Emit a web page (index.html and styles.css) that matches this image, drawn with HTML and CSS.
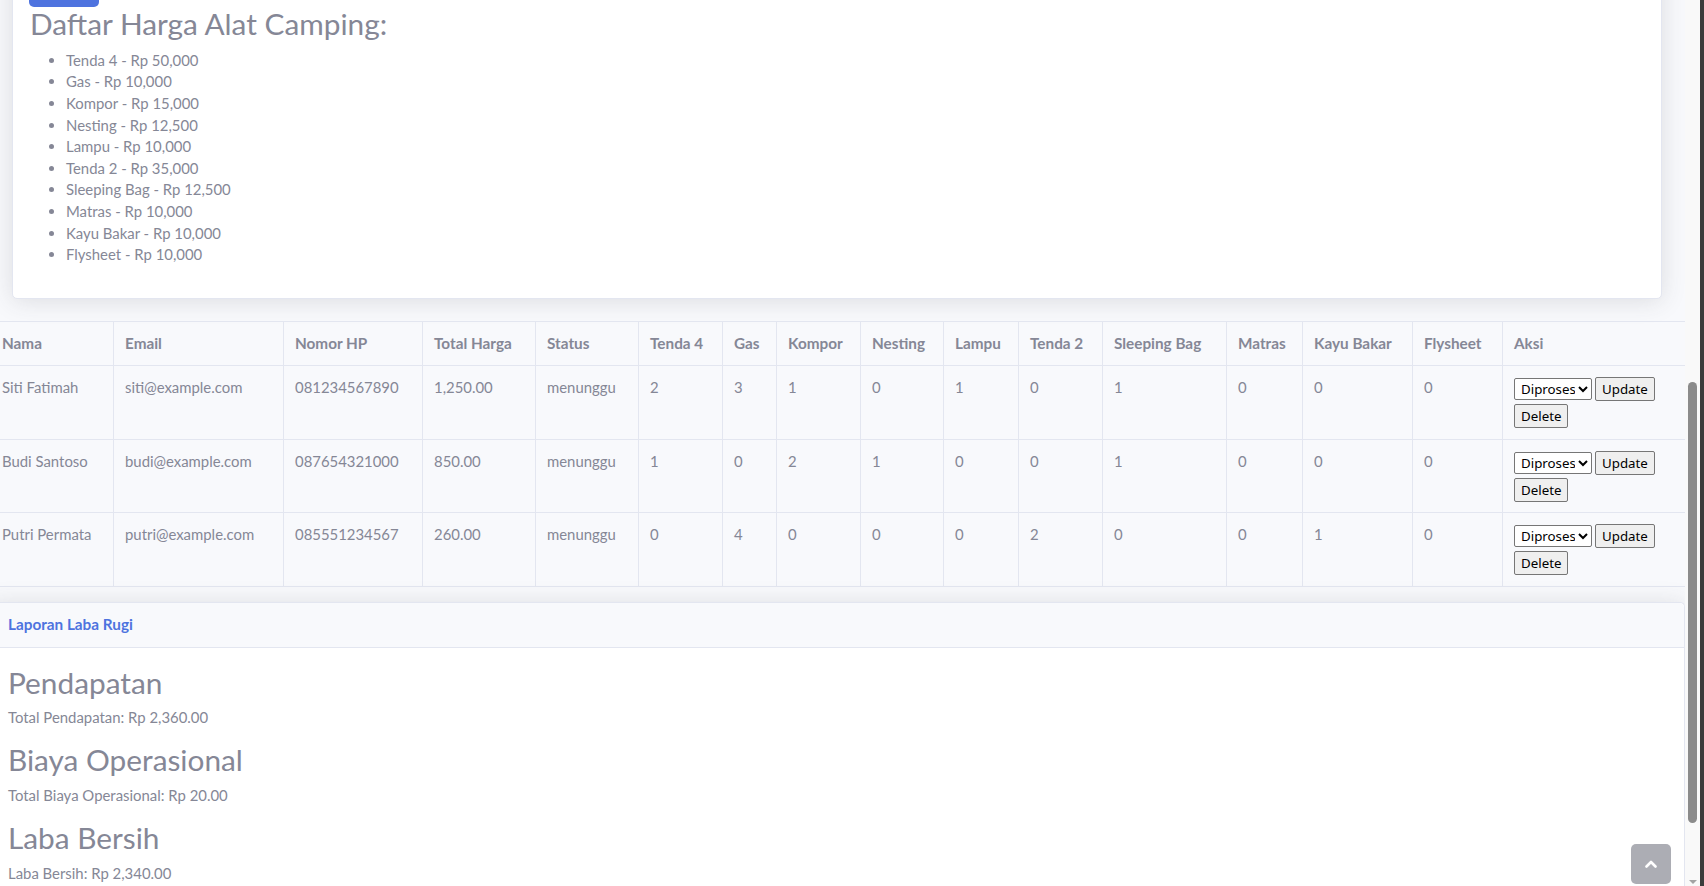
FILE: index.html
```html
<!DOCTYPE html>
<html lang="id">
<head>
<meta charset="utf-8">
<title>Admin - Daftar Harga</title>
<link rel="stylesheet" href="styles.css">
</head>
<body>
<div class="page">
  <div class="content">
    <section class="card price-card">
      <div class="card-body">
        <button class="btn-add" type="button" aria-label="Tambah"></button>
        <h2 class="title">Daftar Harga Alat Camping:</h2>
        <ul class="price-list">
          <li>Tenda 4 - Rp 50,000</li>
          <li>Gas - Rp 10,000</li>
          <li>Kompor - Rp 15,000</li>
          <li>Nesting - Rp 12,500</li>
          <li>Lampu - Rp 10,000</li>
          <li>Tenda 2 - Rp 35,000</li>
          <li>Sleeping Bag - Rp 12,500</li>
          <li>Matras - Rp 10,000</li>
          <li>Kayu Bakar - Rp 10,000</li>
          <li>Flysheet - Rp 10,000</li>
        </ul>
      </div>
    </section>

    <div class="table-wrap">
      <table class="orders">
        <colgroup>
          <col class="w-nama"><col class="w-email"><col class="w-hp"><col class="w-total"><col class="w-status">
          <col class="w-t4"><col class="w-gas"><col class="w-kompor"><col class="w-nesting"><col class="w-lampu">
          <col class="w-t2"><col class="w-sb"><col class="w-matras"><col class="w-kayu"><col class="w-fly"><col class="w-aksi">
        </colgroup>
        <thead>
          <tr>
            <th>Nama</th><th>Email</th><th>Nomor HP</th><th>Total Harga</th><th>Status</th>
            <th>Tenda 4</th><th>Gas</th><th>Kompor</th><th>Nesting</th><th>Lampu</th>
            <th>Tenda 2</th><th>Sleeping Bag</th><th>Matras</th><th>Kayu Bakar</th><th>Flysheet</th><th>Aksi</th>
          </tr>
        </thead>
        <tbody>
          <tr>
            <td>Siti Fatimah</td><td>siti@example.com</td><td>081234567890</td><td>1,250.00</td><td>menunggu</td>
            <td>2</td><td>3</td><td>1</td><td>0</td><td>1</td><td>0</td><td>1</td><td>0</td><td>0</td><td>0</td>
            <td><div class="actions"><select class="ctl-select"><option>Menunggu</option><option selected>Diproses</option><option>Selesai</option></select><button class="ctl-btn" type="button">Update</button><button class="ctl-btn" type="button">Delete</button></div></td>
          </tr>
          <tr>
            <td>Budi Santoso</td><td>budi@example.com</td><td>087654321000</td><td>850.00</td><td>menunggu</td>
            <td>1</td><td>0</td><td>2</td><td>1</td><td>0</td><td>0</td><td>1</td><td>0</td><td>0</td><td>0</td>
            <td><div class="actions"><select class="ctl-select"><option>Menunggu</option><option selected>Diproses</option><option>Selesai</option></select><button class="ctl-btn" type="button">Update</button><button class="ctl-btn" type="button">Delete</button></div></td>
          </tr>
          <tr>
            <td>Putri Permata</td><td>putri@example.com</td><td>085551234567</td><td>260.00</td><td>menunggu</td>
            <td>0</td><td>4</td><td>0</td><td>0</td><td>0</td><td>2</td><td>0</td><td>0</td><td>1</td><td>0</td>
            <td><div class="actions"><select class="ctl-select"><option>Menunggu</option><option selected>Diproses</option><option>Selesai</option></select><button class="ctl-btn" type="button">Update</button><button class="ctl-btn" type="button">Delete</button></div></td>
          </tr>
        </tbody>
      </table>
    </div>

    <section class="card report-card">
      <div class="card-header">
        <h6 class="card-title">Laporan Laba Rugi</h6>
      </div>
      <div class="card-body report-body">
        <h2>Pendapatan</h2>
        <p>Total Pendapatan: Rp 2,360.00</p>
        <h2>Biaya Operasional</h2>
        <p>Total Biaya Operasional: Rp 20.00</p>
        <h2>Laba Bersih</h2>
        <p>Laba Bersih: Rp 2,340.00</p>
      </div>
    </section>
  </div>
</div>

<div class="scrollbar" aria-hidden="true"><div class="scroll-thumb"></div><div class="scroll-arrow"></div></div>
<div class="window-edge" aria-hidden="true"></div>

<a class="scroll-top" href="#" aria-label="Ke atas">
  <svg width="12" height="8" viewBox="0 0 12 8"><path d="M1.5 6.5 L6 2 L10.5 6.5" fill="none" stroke="#fff" stroke-width="2.6" stroke-linecap="round" stroke-linejoin="round"/></svg>
</a>
</body>
</html>
```

FILE: styles.css
```css
* { box-sizing: border-box; }
html, body { margin: 0; height: 100%; overflow: hidden; }
body {
  background: #f8f9fc;
  font-family: Lato, "Noto Sans", sans-serif;
  font-size: 14.9px;
  line-height: 21.6px;
  color: #858796;
}
.page { width: 1685px; height: 886px; overflow: hidden; }
.content { margin-top: -44px; }

.card {
  background: #fff;
  border: 1px solid #e3e6f0;
  border-radius: 5px;
  box-shadow: 0 2px 25px 0 rgba(58, 59, 69, .15);
}
.card-body { padding: 18px 18px 18px 17px; }
.price-card { margin: 0 0 22px 12px; width: 1650px; }

.btn-add {
  display: block;
  width: 70px;
  height: 32px;
  border: 0;
  border-radius: 5px;
  background: #4e73df;
  margin-left: -1px;
}
h2 {
  font-size: 29.8px;
  font-weight: 400;
  line-height: 34.56px;
  margin: 0 0 7.2px;
}
.title { margin-top: 0; margin-bottom: 8.2px; }
.price-list { margin: 0 0 14.4px; padding-left: 36px; }

.table-wrap { margin: 0 0 15px -10px; width: 1695px; }
.orders { border-collapse: collapse; table-layout: fixed; width: 1695px; }
.orders th, .orders td {
  border: 1px solid #e3e6f0;
  padding: 10.8px 11px;
  text-align: left;
  vertical-align: top;
}
.orders th { font-weight: 700; font-size: 15.3px; }
.w-nama { width: 123px; } .w-email { width: 170px; } .w-hp { width: 139px; } .w-total { width: 113px; }
.w-status { width: 103px; } .w-t4 { width: 84px; } .w-gas { width: 54px; } .w-kompor { width: 84px; }
.w-nesting { width: 83px; } .w-lampu { width: 75px; } .w-t2 { width: 84px; } .w-sb { width: 124px; }
.w-matras { width: 76px; } .w-kayu { width: 110px; } .w-fly { width: 90px; } .w-aksi { width: 183px; }

.actions { display: flex; flex-wrap: wrap; align-items: center; gap: 3px 3px; }
.ctl-select {
  width: 78px; height: 22px;
  font-family: "Noto Sans", sans-serif; font-size: 13.3px;
  color: #000; background: #fff;
  border: 1px solid #767676; border-radius: 2px;
  padding: 0 0 0 2px;
}
.ctl-btn {
  height: 24px;
  font-family: "Noto Sans", sans-serif; font-size: 13.3px;
  color: #000; background: #efefef;
  border: 1px solid #767676; border-radius: 2px;
  padding: 0 6px;
}

.report-card { margin-left: -11px; width: 1696px; border-bottom: 0; border-radius: 5px 5px 0 0; }
.card-header { background: #f8f9fc; border-bottom: 1px solid #e3e6f0; padding: 11px 18px; border-radius: 5px 5px 0 0; }
.card-title { margin: 0; font-size: 15.3px; line-height: 21.6px; font-weight: 700; color: #4e73df; }
.report-body { padding: 18px; }
.report-body p { margin: 0 0 14.4px; }

.scrollbar { position: fixed; left: 1685px; top: 0; width: 15px; height: 886px; background: #f9f9f9; }
.scroll-thumb { position: absolute; left: 3px; top: 382px; width: 9px; height: 441px; border-radius: 5px; background: #8b8b8b; }
.scroll-arrow { position: absolute; left: 4px; bottom: 2px; width: 0; height: 0; border-left: 4px solid transparent; border-right: 4px solid transparent; border-top: 4px solid #a3a3a3; }
.window-edge { position: fixed; left: 1700px; top: 0; width: 4px; height: 886px; background: #3b3b3b; }

.scroll-top {
  position: fixed; left: 1631px; top: 844px;
  width: 40px; height: 40px; border-radius: 5px;
  background: rgba(90, 92, 105, .5);
  display: flex; align-items: center; justify-content: center;
}
```
